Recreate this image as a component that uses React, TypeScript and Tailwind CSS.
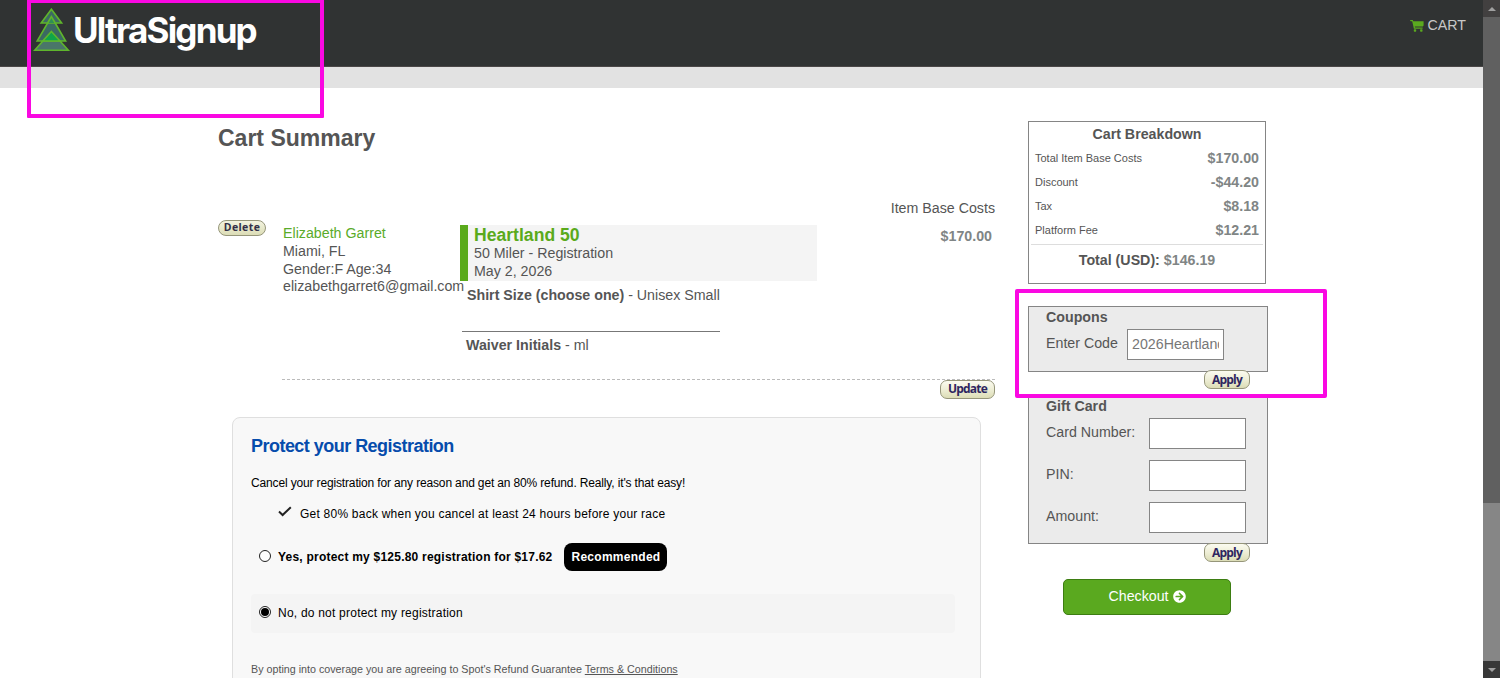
import { useState } from 'react';
import { FaArrowCircleRight } from 'react-icons/fa';

interface CostLine {
    label: string;
    amount: string;
}

const costs: CostLine[] = [
    { label: 'Total Item Base Costs', amount: '$170.00' },
    { label: 'Discount', amount: '-$44.20' },
    { label: 'Tax', amount: '$8.18' },
    { label: 'Platform Fee', amount: '$12.21' },
];

const giftFields = ['Card Number:', 'PIN:', 'Amount:'];

function TreeLogo() {
    return (
        <svg className="w-[38px] h-[44px]" viewBox="0 0 38 44" fill="none" stroke="#5fb52c" strokeWidth="1.6" strokeLinejoin="miter">
            <path d="M18.4 23.5 L35.3 42.2 H1.7 Z" fill="#4a7669" />
            <path d="M18.4 8.5 L32.6 33 H4.2 Z" fill="#3b6a62" />
            <path d="M18.4 1.2 L28.6 15 H8.2 Z" fill="#3d6a62" />
            <path d="M14.6 15 L18.4 8.5 L22.2 15" fill="#2f8f55" />
            <path d="M18.4 23.5 L27 33 H9.8 Z" fill="#0fa54a" />
        </svg>
    );
}

function CartIcon() {
    return (
        <svg className="w-[14px] h-[12px]" viewBox="0 0 14 12" fill="#5aa91f">
            <path d="M0 0 H2.8 L3.3 1.2 H13.6 V5.6 L12.8 6.6 H4.8 L5 7.6 H12.6 V8.8 H3.9 L2.2 1.3 H0.6 Z" />
            <rect x="3.8" y="9.3" width="2.4" height="2.4" rx="0.6" />
            <rect x="10.1" y="9.3" width="2.4" height="2.4" rx="0.6" />
        </svg>
    );
}

function CheckIcon() {
    return (
        <svg className="w-[14px] h-[12px]" viewBox="0 0 14 12" fill="none" stroke="#222" strokeWidth="2">
            <path d="M1 5.6 L4.6 9 L12.8 1.2" />
        </svg>
    );
}

function PillButton({ label }: { label: string }) {
    return (
        <button className="h-[19px] px-[7px] rounded-[7px] border border-[#96967a] bg-linear-to-b from-[#fbfbf0] via-[#eeeed6] to-[#dcddb6] font-['Open_Sans',sans-serif] font-bold text-[12px] leading-[16px] tracking-[-0.8px] text-[#2e2660] whitespace-nowrap">
            {label}
        </button>
    );
}

function Radio({ checked, onChange }: { checked: boolean; onChange: () => void }) {
    return (
        <button
            onClick={onChange}
            className="w-[12px] h-[12px] -mt-[2px] rounded-full border border-[#222] bg-white flex items-center justify-center"
        >
            {checked && <span className="w-[8px] h-[8px] rounded-full bg-black" />}
        </button>
    );
}

export default function App() {
    const [coupon, setCoupon] = useState('2026Heartland');
    const [protect, setProtect] = useState(false);

    return (
        <div className="relative flex w-[1500px] h-[678px] overflow-hidden bg-white font-['Liberation_Sans',Arial,sans-serif] text-[14.22px] leading-[17.6px] text-[#555]">
            <div className="w-[1483px] h-full flex flex-col">
                {/* Header */}
                <header className="h-[67px] shrink-0 bg-[#303333] border-b border-[#4a4747] flex justify-between pl-[33px] pr-[17px]">
                    <div className="flex pt-[8px] gap-[2px]">
                        <TreeLogo />
                        <span className="font-[Inter,sans-serif] font-bold text-[35px] leading-[44px] tracking-[-1.8px] text-white">UltraSignup</span>
                    </div>
                    <div className="flex items-center gap-[4px] h-[51px] text-[#c8c8c8]">
                        <CartIcon />
                        <span>CART</span>
                    </div>
                </header>
                <div className="h-[21px] shrink-0 bg-[#e2e2e2]" />

                <main className="flex-1 min-h-0 flex pl-[218px]">
                    {/* Cart items */}
                    <section className="w-[777px] shrink-0 pt-[38px]">
                        <h1 className="font-bold text-[23px] leading-[24px]">Cart Summary</h1>
                        <p className="mt-[50.4px] text-right">Item Base Costs</p>

                        <div className="grid grid-cols-[65px_177px_357px_1fr] h-[161px]">
                            <div className="pt-[2px]">
                                <button className="w-[48px] h-[16px] rounded-full border border-[#96967a] bg-linear-to-b from-[#f3f3e0] to-[#dcddb6] font-['Open_Sans',sans-serif] font-bold text-[10.5px] leading-[13px] tracking-[0.4px] text-[#333048] flex items-center justify-center">
                                    Delete
                                </button>
                            </div>
                            <div className="pt-[7.5px]">
                                <p className="text-[#5aab2a]">Elizabeth Garret</p>
                                <p>Miami, FL</p>
                                <p>Gender:F Age:34</p>
                                <p>elizabethgarret6@gmail.com</p>
                            </div>
                            <div className="pt-[7px]">
                                <div className="h-[56px] bg-[#f4f4f4] border-l-8 border-[#5aaa1c] pl-[6px]">
                                    <h2 className="font-bold text-[17.6px] leading-[20px] text-[#5aaa1c]">Heartland 50</h2>
                                    <p>50 Miler - Registration</p>
                                    <p>May 2, 2026</p>
                                </div>
                                <p className="mt-[6px] ml-[7px]"><b>Shirt Size (choose one)</b> - Unisex Small</p>
                                <hr className="mt-[26.5px] ml-[2px] w-[258px] border-[#777]" />
                                <p className="mt-[5px] ml-[6px]"><b>Waiver Initials</b> - ml</p>
                            </div>
                            <p className="pt-[10px] pr-[3px] text-right font-bold text-[#808585]">$170.00</p>
                        </div>

                        <div className="ml-[64px] border-t border-dashed border-[#bbb] flex justify-end">
                            <PillButton label="Update" />
                        </div>

                        {/* Refund protection */}
                        <div className="mt-[18px] ml-[14px] w-[749px] h-[300px] rounded-lg border border-[#dfdfdf] bg-[#f8f8f8] px-[18px] pt-[18px] text-[12px] leading-[16px] text-black">
                            <h3 className="font-bold text-[18px] leading-[20px] tracking-[-0.53px] text-[#064cac]">Protect your Registration</h3>
                            <p className="mt-[19px] tracking-[-0.15px]">Cancel your registration for any reason and get an 80% refund. Really, it's that easy!</p>
                            <div className="mt-[15px] pl-[27px] flex gap-[8px] tracking-[0.23px]">
                                <CheckIcon />
                                <span>Get 80% back when you cancel at least 24 hours before your race</span>
                            </div>
                            <div className="mt-[21px] pl-[8px] h-[28px] flex items-center font-bold tracking-[0.22px]">
                                <Radio checked={protect} onChange={() => setProtect(true)} />
                                <span className="ml-[7px]">Yes, protect my $125.80 registration for $17.62</span>
                                <span className="ml-[12px] h-[28px] w-[103px] rounded-lg bg-black text-white leading-[28px] text-center tracking-[0.27px]">Recommended</span>
                            </div>
                            <div className="mt-[23px] w-[704px] h-[39px] rounded bg-[#f4f4f4] pl-[8px] flex items-center tracking-[0.22px]">
                                <Radio checked={!protect} onChange={() => setProtect(false)} />
                                <span className="ml-[7px]">No, do not protect my registration</span>
                            </div>
                            <p className="mt-[28px] text-[10.72px] text-[#555]">
                                By opting into coverage you are agreeing to Spot's Refund Guarantee <a className="underline">Terms &amp; Conditions</a>
                            </p>
                        </div>
                    </section>

                    {/* Totals and payment */}
                    <aside className="ml-[33px] pt-[33px] w-[240px] shrink-0">
                        <div className="w-[238px] h-[163px] border border-[#858585] px-[2px] pt-[4px]">
                            <h2 className="text-center font-bold">Cart Breakdown</h2>
                            <div className="mt-[3px] px-[4px]">
                                {costs.map(line => (
                                    <div key={line.label} className="h-[24.2px] flex items-center justify-between">
                                        <span className="text-[11px]">{line.label}</span>
                                        <span className="font-bold text-[#808585]">{line.amount}</span>
                                    </div>
                                ))}
                            </div>
                            <div className="mt-[1px] border-t border-[#ddd] pt-[7px] text-center font-bold">
                                Total (USD): <span className="text-[#808585]">$146.19</span>
                            </div>
                        </div>

                        <div className="mt-[22px] h-[66px] border border-[#858585] bg-[#ebebeb] pl-[17px] pt-[2px]">
                            <h3 className="font-bold">Coupons</h3>
                            <div className="mt-[2px] flex items-center">
                                <label className="w-[81px]">Enter Code</label>
                                <input
                                    value={coupon}
                                    onChange={(e) => setCoupon(e.target.value)}
                                    className="w-[97px] h-[31px] px-[4px] bg-white border border-[#858585] text-[#777]"
                                />
                            </div>
                        </div>
                        <div className="-mt-[2px] pr-[18px] flex justify-end">
                            <PillButton label="Apply" />
                        </div>

                        <div className="mt-[6px] h-[149px] border border-[#858585] bg-[#ebebeb] pl-[17px] pt-[2px]">
                            <h3 className="font-bold">Gift Card</h3>
                            <div className="mt-[2px] flex flex-col gap-[11px]">
                                {giftFields.map(field => (
                                    <div key={field} className="flex items-center">
                                        <label className="w-[103px]">{field}</label>
                                        <input className="w-[97px] h-[31px] px-[4px] bg-white border border-[#858585]" />
                                    </div>
                                ))}
                            </div>
                        </div>
                        <div className="-mt-[1px] pr-[18px] flex justify-end">
                            <PillButton label="Apply" />
                        </div>

                        <button className="mt-[17px] ml-[35px] w-[168px] h-[36px] rounded-[5px] border border-[#3d7d12] bg-[#5aa91f] text-white flex items-center justify-center gap-[4px]">
                            Checkout <FaArrowCircleRight className="w-[13px] h-[13px] -mt-[1px]" />
                        </button>
                    </aside>
                </main>
            </div>

            {/* Scrollbar */}
            <div className="w-[17px] h-full shrink-0 flex flex-col bg-[#868686]">
                <div className="h-[17px] bg-[#424040] flex items-center justify-center">
                    <span className="border-x-4 border-x-transparent border-b-4 border-b-[#a0a0a0]" />
                </div>
                <div className="h-[486px] bg-[#606060]" />
                <div className="mt-auto h-[17px] bg-[#383838] flex items-center justify-center">
                    <span className="border-x-4 border-x-transparent border-t-4 border-t-[#a0a0a0]" />
                </div>
            </div>

            {/* Highlight frames */}
            <div className="absolute left-[27px] -top-[1px] w-[297px] h-[119px] border-4 border-[#fa08e2] rounded-[1px]" />
            <div className="absolute left-[1015px] top-[289px] w-[312px] h-[109px] border-4 border-[#fa08e2] rounded-[2px]" />
        </div>
    );
}
